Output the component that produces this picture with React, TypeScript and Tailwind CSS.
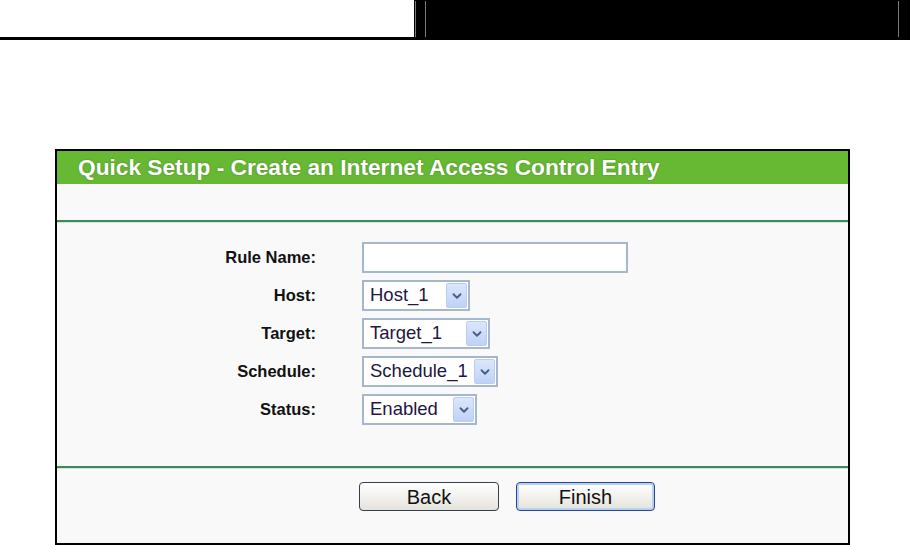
import { ChevronDown } from "lucide-react";

const font = { fontFamily: '"Liberation Sans", Arial, sans-serif' };

function Select({ value, width }: { value: string; width: number }) {
  return (
    <div
      className="flex h-[31px] items-center justify-between border-2 border-[#a4b7cf] bg-white pl-[6px] pr-[1px]"
      style={{ width }}
    >
      <span className="text-[18.5px] leading-none text-[#231640]">{value}</span>
      <span className="flex h-[25px] w-[21px] items-center justify-center rounded-[2px] border border-[#b9cdf2] bg-gradient-to-b from-[#dbe6fb] to-[#bfd2f6]">
        <ChevronDown className="h-[14px] w-[14px] text-[#4b5e83]" strokeWidth={3.2} />
      </span>
    </div>
  );
}

function Row({ label, children }: { label: string; children: React.ReactNode }) {
  return (
    <div className="flex h-[31px] items-center">
      <div className="w-[259px] text-right text-[16.5px] font-bold text-[#111]">{label}</div>
      <div className="ml-[46px]">{children}</div>
    </div>
  );
}

function Divider() {
  return (
    <div>
      <div className="h-[2px] bg-[#3a8a5c]" />
      <div className="h-px bg-[#d3e6d9]" />
    </div>
  );
}

export default function App() {
  return (
    <div className="h-[545px] w-[910px] overflow-hidden bg-white" style={font}>
      <div className="flex h-[40px]">
        <div className="h-[40px] w-[414px] border-b-[3px] border-black bg-white" />
        <div className="flex h-[40px] flex-1 bg-black pt-px">
          <div className="ml-px h-[36px] w-px bg-[#7a7a7a]" />
          <div className="ml-[9px] h-[36px] w-px bg-[#7a7a7a]" />
          <div className="ml-auto mr-[11px] h-[36px] w-px bg-[#7a7a7a]" />
        </div>
      </div>

      <div className="ml-[55px] mt-[109px] w-[795px] border-2 border-black bg-[#f9f9f9]">
        <div className="flex h-[33px] items-center bg-[#67b934] pl-[21px]">
          <span
            className="text-[22.7px] font-bold leading-none text-white"
            style={{ textShadow: "0 0 2px rgba(60,90,40,0.6)" }}
          >
            Quick Setup - Create an Internet Access Control Entry
          </span>
        </div>
        <div className="h-[36px]" />
        <Divider />

        <div className="flex h-[243px] flex-col gap-[7px] pt-[19px]">
          <Row label="Rule Name:">
            <div className="h-[31px] w-[266px] border-2 border-[#a4b7cf] bg-white" />
          </Row>
          <Row label="Host:">
            <Select value="Host_1" width={108} />
          </Row>
          <Row label="Target:">
            <Select value="Target_1" width={128} />
          </Row>
          <Row label="Schedule:">
            <Select value="Schedule_1" width={136} />
          </Row>
          <Row label="Status:">
            <Select value="Enabled" width={115} />
          </Row>
        </div>

        <Divider />
        <div className="flex h-[74px] gap-[17px] pl-[302px] pt-[13px]">
          <button className="h-[29px] w-[140px] rounded-[4px] border border-[#34404f] bg-gradient-to-b from-white to-[#e4e3dc] text-[20px] leading-none text-[#111]">
            Back
          </button>
          <button className="h-[29px] w-[139px] rounded-[4px] border border-[#23498a] bg-gradient-to-b from-white to-[#e4e3dc] text-[20px] leading-none text-[#111] shadow-[inset_0_0_0_2px_#b9d0f3]">
            Finish
          </button>
        </div>
      </div>
    </div>
  );
}
